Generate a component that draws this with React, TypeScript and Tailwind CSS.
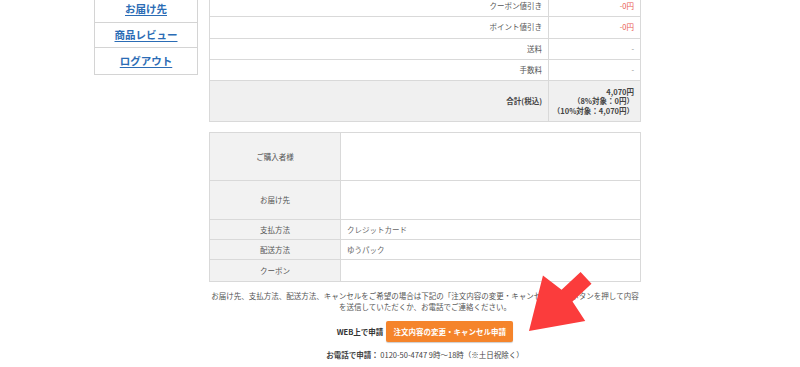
import React from "react";

const font = { fontFamily: '"Noto Sans CJK JP", "Noto Sans", sans-serif' };

const sideLinks = ["お届け先", "商品レビュー", "ログアウト"];

const priceRows = [
    { label: "クーポン値引き", value: "-0円", red: true },
    { label: "ポイント値引き", value: "-0円", red: true },
    { label: "送料", value: "-", red: false },
    { label: "手数料", value: "-", red: false },
];

const infoRows = [
    { label: "ご購入者様", value: "", h: "h-[48px]" },
    { label: "お届け先", value: "", h: "h-[39px]" },
    { label: "支払方法", value: "クレジットカード", h: "h-[20px]" },
    { label: "配送方法", value: "ゆうパック", h: "h-[20px]" },
    { label: "クーポン", value: "", h: "h-[21px]" },
];

export default function App() {
    return (
        <div className="relative w-[800px] h-[367px] overflow-hidden bg-white" style={font}>
            <div className="flex items-start pl-[94px]">
                {/* サイドメニュー */}
                <div className="w-[104px] -mt-[3px] border border-t-0 border-[#d4d4d4] bg-white">
                    {sideLinks.map((l, i) => (
                        <div
                            key={l}
                            className={`h-[25.5px] flex items-center justify-center ${i < sideLinks.length - 1 ? "border-b border-[#d4d4d4]" : ""}`}
                        >
                            <a className="text-[10.5px] font-bold text-[#2b6cb5] underline underline-offset-2 leading-none">{l}</a>
                        </div>
                    ))}
                </div>

                <div className="ml-[11px] w-[432px] -mt-[4px]">
                    {/* 金額テーブル */}
                    <div className="border border-t-0 border-[#d9d9d9] text-[7.5px] leading-[10px]">
                        {priceRows.map((r) => (
                            <div key={r.label} className="flex h-[21.3px] border-b border-[#d9d9d9]">
                                <div className="flex-1 flex items-center justify-end pr-[6px] text-[#555] border-r border-[#d9d9d9]">
                                    {r.label}
                                </div>
                                <div className={`w-[91px] flex items-center justify-end pr-[6px] ${r.red ? "text-[#e8554e]" : "text-[#888]"}`}>
                                    {r.value}
                                </div>
                            </div>
                        ))}
                        <div className="flex h-[40px] bg-[#f0f0f0] font-bold text-[#444]">
                            <div className="flex-1 flex items-center justify-end pr-[6px] border-r border-[#d9d9d9]">
                                合計(税込)
                            </div>
                            <div className="w-[91px] flex flex-col items-end justify-center pr-[6px] leading-[9.5px] whitespace-nowrap">
                                <span>4,070円</span>
                                <span>（8%対象：0円）</span>
                                <span>（10%対象：4,070円）</span>
                            </div>
                        </div>
                    </div>

                    {/* 注文者情報 */}
                    <div className="mt-[10px] border border-[#d9d9d9] text-[7.5px] leading-[10px]">
                        {infoRows.map((r, i) => (
                            <div
                                key={r.label}
                                className={`flex ${r.h} ${i < infoRows.length - 1 ? "border-b border-[#d9d9d9]" : ""}`}
                            >
                                <div className="w-[131px] flex items-center justify-center bg-[#f2f2f2] text-[#555] border-r border-[#d9d9d9]">
                                    {r.label}
                                </div>
                                <div className="flex-1 flex items-center pl-[6px] text-[#666]">{r.value}</div>
                            </div>
                        ))}
                    </div>

                    <p className="mt-[9px] -mx-[6px] text-center text-[7.5px] leading-[10.5px] text-[#555]">
                        <span className="block whitespace-nowrap">
                            お届け先、支払方法、配送方法、キャンセルをご希望の場合は下記の「注文内容の変更・キャンセル申請」ボタンを押して内容
                        </span>
                        <span className="block whitespace-nowrap">を送信していただくか、お電話でご連絡ください。</span>
                    </p>

                    <div className="mt-[9px] flex items-center justify-center gap-[3px]">
                        <span className="text-[7.5px] font-bold text-[#333]">WEB上で申請</span>
                        <button className="w-[127px] h-[21px] rounded-[2px] bg-[#f5842b] text-white text-[7.5px] font-bold shadow-[0_1px_1px_rgba(0,0,0,0.2)]">
                            注文内容の変更・キャンセル申請
                        </button>
                    </div>

                    <div className="mt-[7px] text-center text-[7.5px] text-[#444] whitespace-nowrap">
                        <span className="font-bold">お電話で申請：</span> 0120-50-4747 9時〜18時（※土日祝除く）
                    </div>
                </div>
            </div>

            {/* 赤い矢印 */}
            <svg className="absolute left-0 top-0 pointer-events-none" width="800" height="367">
                <g transform="translate(529 331) rotate(-43)">
                    <polygon points="0,0 48,-31 52,-8 78,-8 78,8 52,8 48,31" fill="#fb3c3c" />
                </g>
            </svg>
        </div>
    );
}
